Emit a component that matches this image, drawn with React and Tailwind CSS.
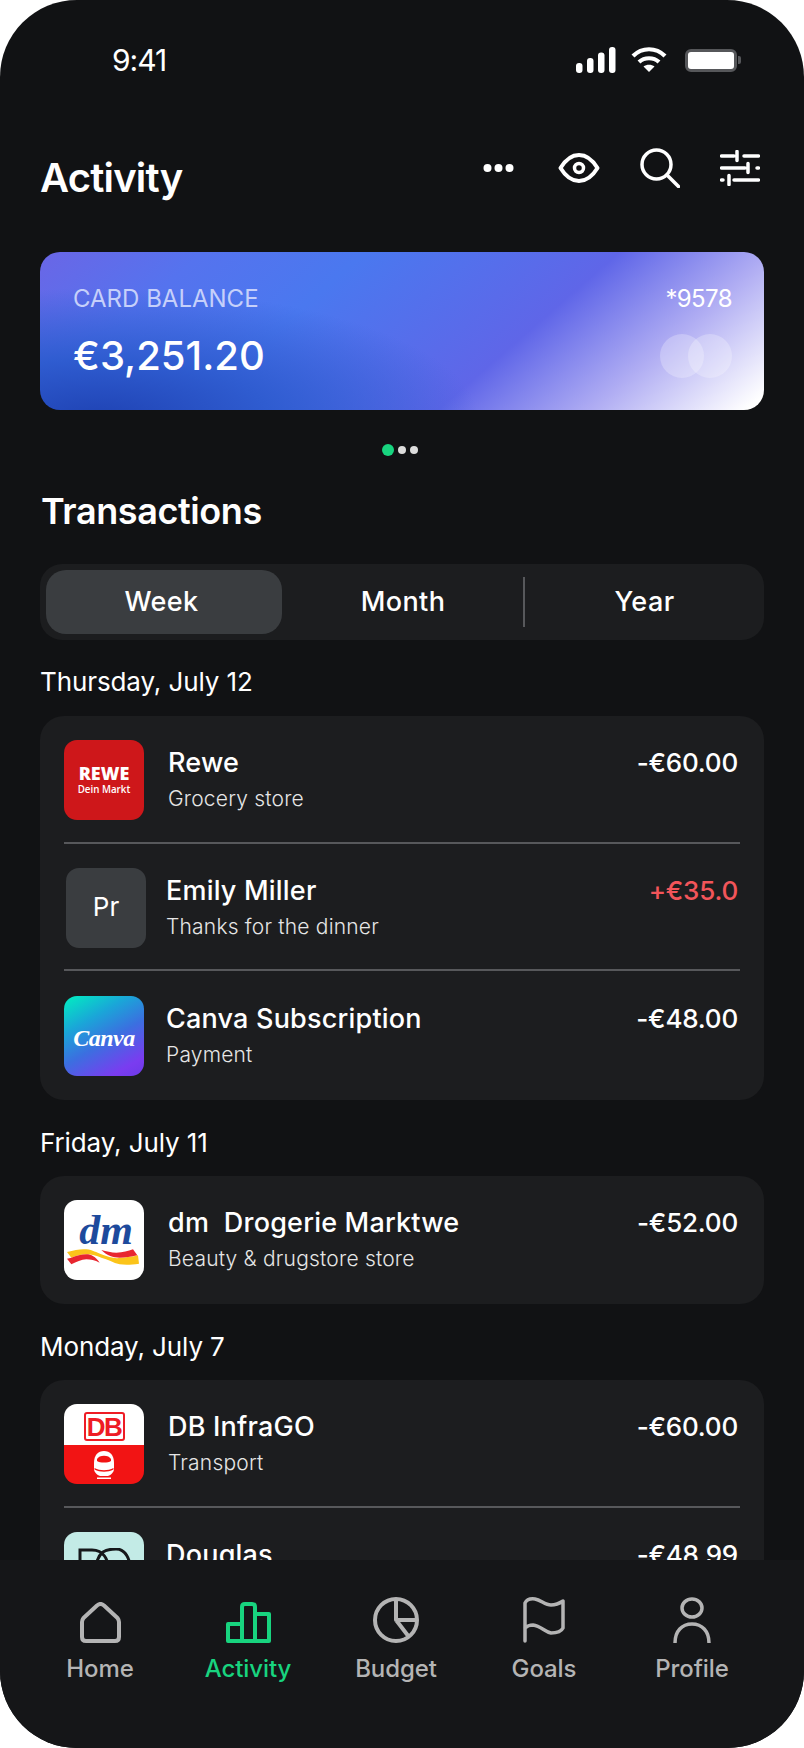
import React from 'react';

const font = "font-['Inter','Liberation_Sans',sans-serif]";

function StatusIcons() {
    return (
        <div className="flex items-center h-[40px]">
            <svg width="40" height="26" viewBox="0 0 40 26" fill="white">
                <rect x="0" y="16" width="6.500" height="10" rx="3" />
                <rect x="11" y="11" width="6.500" height="15" rx="3" />
                <rect x="22" y="5.500" width="6.500" height="20.500" rx="3" />
                <rect x="33" y="0" width="6.500" height="26" rx="3" />
            </svg>
            <svg width="36" height="26" viewBox="0 0 36 26" fill="none" stroke="white" strokeWidth="4.200" className="ml-[15px]">
                <path d="M2 9 C11 0 25 0 34 9" />
                <path d="M8 15 C13.500 10 22.500 10 28 15" />
                <path d="M18 25 L12.500 19.500 C15.500 17 20.500 17 23.500 19.500 Z" fill="white" stroke="none" />
            </svg>
            <div className="ml-[18px] w-[52px] h-[23px] rounded-[6px] border-[3px] border-[#56575a] bg-white" />
            <div className="ml-[1px] w-[3px] h-[8px] rounded-r-[2px] bg-[#56575a]" />
        </div>
    );
}

function HeaderIcons() {
    return (
        <div className="flex items-center gap-[40px] h-[40px]">
            <svg width="35" height="10" viewBox="0 0 35 10" fill="white">
                <circle cx="4.500" cy="5" r="4" />
                <circle cx="15.500" cy="5" r="4" />
                <circle cx="26.500" cy="5" r="4" />
            </svg>
            <svg width="42" height="30" viewBox="0 0 42 30" fill="none" stroke="white" strokeWidth="4">
                <path d="M2.500 15 C8 6 14 2 21 2 C28 2 34 6 39.500 15 C34 24 28 28 21 28 C14 28 8 24 2.500 15 Z" strokeLinejoin="round" />
                <circle cx="21" cy="15" r="4.500" strokeWidth="3.500" />
            </svg>
            <svg width="40" height="40" viewBox="0 0 40 40" fill="none" stroke="white" strokeWidth="3.500" strokeLinecap="round">
                <circle cx="16.500" cy="16.500" r="14.500" />
                <path d="M27 27 L38.500 38.500" />
            </svg>
            <svg width="40" height="36" viewBox="0 0 40 36" fill="none" stroke="white" strokeWidth="3.500" strokeLinecap="round">
                <path d="M1.500 6 H14 M17 1.500 V10.500 M24 6 H38.500" />
                <path d="M1.500 18 H25 M28 13.500 V22.500 M37 18 H38.500" />
                <path d="M1.500 30 H3 M9 25.500 V34.500 M14 30 H38.500" />
            </svg>
        </div>
    );
}

function ReweLogo() {
    return (
        <div className="w-full h-full bg-[#ce171a] flex flex-col items-center justify-center text-white font-['Open_Sans',sans-serif]">
            <span className="text-[18px] leading-[17px] font-extrabold">REWE</span>
            <span className="text-[11.500px] leading-[13px] font-semibold scale-x-[0.85]">Dein Markt</span>
        </div>
    );
}

function PrLogo() {
    return (
        <div className="w-full h-full bg-[#3a3d40] flex items-center justify-center text-white text-[26px] leading-[32px] pb-[2px]">
            Pr
        </div>
    );
}

function CanvaLogo() {
    return (
        <div className="w-full h-full bg-[linear-gradient(150deg,#00f0c0_0%,#1aa6d8_30%,#3b6fe0_55%,#7a3cf0_85%,#6c3ae8_100%)] flex items-center justify-center pt-[3px]">
            <span className="text-white text-[24px] italic font-bold font-['Liberation_Serif',serif] tracking-[-0.5px]">Canva</span>
        </div>
    );
}

function DmLogo() {
    return (
        <div className="w-full h-full bg-white flex flex-col items-center">
            <span className="text-[#1d4a9c] text-[42px] leading-[36px] mt-[12px] ml-[4px] italic font-bold font-['Liberation_Serif',serif]">dm</span>
            <svg width="76" height="18" viewBox="24 146 228 54" className="shrink-0">
                <path d="M27 158 C50 152 70 148 85 150 C105 152 115 160 130 165 C150 172 165 178 185 176 C205 174 225 172 240 168 L243 193 C220 197 200 197 185 195 C165 190 150 180 130 175 C110 168 100 165 85 165 C70 165 55 170 40 175 Z" fill="#fbc41a" />
                <path d="M27 178 L40 175 C55 170 70 165 85 165 C100 165 112 172 125 190 C110 182 98 180 85 180 C70 181 55 188 40 195 Z" fill="#e8262f" />
                <path d="M130 152 C145 156 160 160 175 160 C195 160 210 155 225 150 L238 168 C220 173 200 175 185 175 C165 175 148 170 130 152 Z" fill="#e8262f" />
            </svg>
        </div>
    );
}

function DbLogo() {
    return (
        <div className="w-full h-full flex flex-col">
            <div className="h-[41px] bg-white flex items-center justify-center pt-[4px]">
                <div className="w-[41px] h-[29px] border-[2.500px] border-[#ee1c25] rounded-[3px] flex items-center justify-center text-[#ee1c25] text-[26px] leading-none font-bold tracking-[-1.500px] font-['Liberation_Sans',sans-serif]">
                    DB
                </div>
            </div>
            <div className="flex-1 bg-[#f21414] flex items-center justify-center">
                <svg width="20" height="28" viewBox="0 0 20 28" fill="white">
                    <path d="M10 0 C16 0 20 4 20 12 V18 C20 21 17 24 14 25 H6 C3 24 0 21 0 18 V12 C0 4 4 0 10 0 Z" />
                    <path d="M3 8 C5 3.500 15 3.500 17 8 V10 C14 12 6 12 3 10 Z" fill="#f21414" />
                    <rect x="3" y="26.500" width="14" height="1.500" />
                    <path d="M0.500 17 C6 20 14 20 19.500 17 V18.500 C14 21.500 6 21.500 0.500 18.500 Z" fill="#f21414" />
                </svg>
            </div>
        </div>
    );
}

function DouglasLogo() {
    return (
        <div className="w-full h-full bg-[#c3ebe6] flex justify-center pt-[16px]">
            <svg width="56" height="40" viewBox="0 0 56 40" fill="none" stroke="#16181a" strokeWidth="3">
                <path d="M4 2 H16 C28 2 32 12 32 20 C32 30 26 38 16 38 H4 Z" />
                <path d="M20 22 C20 14 22 8 27 4 C32 1 36 1 40 1 C50 1 54 12 54 20" />
            </svg>
        </div>
    );
}

const groups = [
    {
        date: 'Thursday, July 12',
        dateCls: 'mt-[24px] mb-[16px]',
        rows: [
            { logo: <ReweLogo />, title: 'Rewe', sub: 'Grocery store', amount: '-€60.00', logoCls: 'ml-0', textCls: 'ml-[24px]', padCls: 'pt-[24px] pb-[22px]' },
            { logo: <PrLogo />, title: 'Emily Miller', sub: 'Thanks for the dinner', amount: '+€35.0', red: true, logoCls: 'ml-[2px]', textCls: 'ml-[20px]', padCls: 'pt-[24px] pb-[21px]' },
            { logo: <CanvaLogo />, title: 'Canva Subscription', sub: 'Payment', amount: '-€48.00', logoCls: 'ml-0', textCls: 'ml-[22px]', padCls: 'pt-[25px] pb-[24px]' },
        ],
    },
    {
        date: 'Friday, July 11',
        dateCls: 'mt-[25px] mb-[15px]',
        rows: [
            { logo: <DmLogo />, title: 'dm\u00a0 Drogerie Marktwe', sub: 'Beauty & drugstore store', amount: '-€52.00', logoCls: 'ml-0', textCls: 'ml-[24px]', padCls: 'pt-[24px] pb-[24px]' },
        ],
    },
    {
        date: 'Monday, July 7',
        dateCls: 'mt-[25px] mb-[15px]',
        rows: [
            { logo: <DbLogo />, title: 'DB InfraGO', sub: 'Transport', amount: '-€60.00', logoCls: 'ml-0', textCls: 'ml-[24px]', padCls: 'pt-[24px] pb-[22px]' },
            { logo: <DouglasLogo />, title: 'Douglas', sub: 'Beauty', amount: '-€48.99', logoCls: 'ml-0', textCls: 'ml-[22px]', padCls: 'pt-[24px] pb-[24px]' },
        ],
    },
];

function Row({ row, last }) {
    return (
        <div>
            <div className={`flex mx-[24px] ${row.padCls}`}>
                <div className={`w-[80px] h-[80px] rounded-[13px] overflow-hidden shrink-0 ${row.logoCls}`}>
                    {row.logo}
                </div>
                <div className={`flex-1 pt-[5px] ${row.textCls}`}>
                    <div className="text-[27px] leading-[36px] font-medium tracking-[0.2px] text-white">{row.title}</div>
                    <div className="mt-[1px] text-[21px] leading-[34px] font-light tracking-[0.2px] text-[#e6e6e6]">{row.sub}</div>
                </div>
                <div className={`pt-[5px] pr-[2px] text-[26px] leading-[36px] font-medium tracking-[-0.2px] ${row.red ? 'text-[#f2555a]' : 'text-white'}`}>
                    {row.amount}
                </div>
            </div>
            {!last && <div className="mx-[24px] h-[2px] bg-[#57585b]" />}
        </div>
    );
}

const navItems = [
    {
        label: 'Home',
        icon: (
            <svg width="41" height="41" viewBox="0 0 41 41" fill="none" stroke="currentColor" strokeWidth="4" strokeLinejoin="round">
                <path d="M2 20 Q2 18 3.500 16 L17 3.500 Q20.500 0.500 24 3.500 L37.500 16 Q39 18 39 20 V35 Q39 39 35 39 H6 Q2 39 2 35 Z" />
            </svg>
        ),
    },
    {
        label: 'Activity',
        active: true,
        icon: (
            <svg width="45" height="41" viewBox="0 0 45 41" fill="none" stroke="currentColor" strokeWidth="4" strokeLinejoin="round">
                <path d="M2 22 H16 V39 H2 Z" />
                <path d="M16 39 V5 Q16 2 19 2 H26 Q29 2 29 5 V39 Z" />
                <path d="M29 12 H43 V39 H29 Z" />
            </svg>
        ),
    },
    {
        label: 'Budget',
        icon: (
            <svg width="46" height="46" viewBox="0 0 46 46" fill="none" stroke="currentColor" strokeWidth="4" strokeLinejoin="round">
                <circle cx="23" cy="23" r="21" />
                <path d="M23 2 V23 H44 M23 23 L36 40" />
            </svg>
        ),
    },
    {
        label: 'Goals',
        icon: (
            <svg width="42" height="46" viewBox="0 0 42 46" fill="none" stroke="currentColor" strokeWidth="3.500" strokeLinecap="round" strokeLinejoin="round">
                <path d="M2 44 V6 C4 2 8 1.500 12 2 C18 3 22 8 28 8 C33 8 37 6 40 4 V31 C38 35 33 36 28 36 C22 35 18 29 10 28 C7 28 4 29 2 31" />
            </svg>
        ),
    },
    {
        label: 'Profile',
        icon: (
            <svg width="38" height="46" viewBox="0 0 38 46" fill="none" stroke="currentColor" strokeWidth="3.500">
                <ellipse cx="19" cy="11" rx="10" ry="9" />
                <path d="M2 46 C2 34 9 27 19 27 C29 27 36 34 36 46" />
            </svg>
        ),
    },
];

export default function App() {
    return (
        <div className={`w-[804px] h-[1748px] bg-white ${font}`}>
            <div className="w-full h-full rounded-[77px] bg-[#111214] overflow-hidden flex flex-col text-white">
                <div className="flex-1 min-h-0 overflow-hidden">
                    {/* Status bar */}
                    <div className="h-[120px] pt-[40px] pl-[112px] pr-[63px] flex justify-between items-start">
                        <span className="text-[30px] leading-[40px] font-normal tracking-[-1px]">9:41</span>
                        <StatusIcons />
                    </div>

                    {/* Header */}
                    <div className="h-[132px] pt-[28px] pl-[40px] pr-[44px] flex justify-between items-start">
                        <h1 className="mt-[6px] text-[40px] leading-[48px] font-semibold tracking-[-0.8px]">Activity</h1>
                        <HeaderIcons />
                    </div>

                    {/* Balance card */}
                    <div className="mx-[40px] h-[158px] rounded-[20px] pt-[31px] pl-[33px] pr-[32px] bg-[radial-gradient(ellipse_380px_130px_at_8%_105%,#1f43b4_0%,#2f5cd0_45%,rgba(74,120,239,0)_100%),linear-gradient(139deg,#6a66e6_0%,#5573ee_18%,#4a78ef_36%,#5f66e8_64%,#b0adf3_81%,#ffffff_98%)]">
                        <div className="flex justify-between items-center h-[32px] text-[24px] leading-[32px]">
                            <span className="text-[#c6d0fa]">CARD BALANCE</span>
                            <span className="text-white tracking-[-0.6px]">*9578</span>
                        </div>
                        <div className="flex justify-between items-center h-[44px] mt-[19px]">
                            <span className="text-[40px] leading-[44px] font-medium">€3,251.20</span>
                            <div className="flex">
                                <div className="w-[44px] h-[44px] rounded-full bg-white/25" />
                                <div className="w-[44px] h-[44px] rounded-full bg-white/25 -ml-[16px]" />
                            </div>
                        </div>
                    </div>

                    {/* Pager dots */}
                    <div className="mt-[34px] pl-[382px] flex items-center gap-[4px]">
                        <div className="w-[12px] h-[12px] rounded-full bg-[#18d47f]" />
                        <div className="w-[8px] h-[8px] rounded-full bg-[#dcdcdc]" />
                        <div className="w-[8px] h-[8px] rounded-full bg-[#dcdcdc]" />
                    </div>

                    <h2 className="mt-[35px] pl-[41px] text-[36px] leading-[40px] font-semibold tracking-[-0.4px]">Transactions</h2>

                    {/* Range tabs */}
                    <div className="mt-[33px] mx-[40px] h-[76px] rounded-[22px] bg-[#1c1d1f] pl-[6px] flex items-center text-[27px] font-medium tracking-[0.4px]">
                        <div className="w-[236px] h-[64px] rounded-[20px] bg-[#3a3d40] flex items-center justify-center pr-[5px] pt-[1px]">Week</div>
                        <div className="flex-1 text-center pt-[1px] pl-[1px]">Month</div>
                        <div className="w-[2px] h-[50px] bg-[#57585b]" />
                        <div className="w-[239px] text-center pt-[1px]">Year</div>
                    </div>

                    {/* Transactions */}
                    {groups.map((group) => (
                        <div key={group.date}>
                            <div className={`pl-[40px] text-[26px] leading-[36px] tracking-[-0.1px] ${group.dateCls}`}>{group.date}</div>
                            <div className="mx-[40px] rounded-[24px] bg-[#1c1d1f]">
                                {group.rows.map((row, i) => (
                                    <Row key={row.title} row={row} last={i === group.rows.length - 1} />
                                ))}
                            </div>
                        </div>
                    ))}
                </div>

                {/* Bottom nav */}
                <div className="h-[188px] shrink-0 bg-[#151618] grid grid-cols-5 pl-[26px] pr-[38px] pt-[37px]">
                    {navItems.map((item) => (
                        <div key={item.label} className={`flex flex-col items-center ${item.active ? 'text-[#18d47f]' : 'text-[#b4b4b4]'}`}>
                            <div className="h-[46px] flex items-end">{item.icon}</div>
                            <span className="mt-[12px] text-[24px] leading-[28px] font-medium tracking-[-0.1px]">{item.label}</span>
                        </div>
                    ))}
                </div>
            </div>
        </div>
    );
}
